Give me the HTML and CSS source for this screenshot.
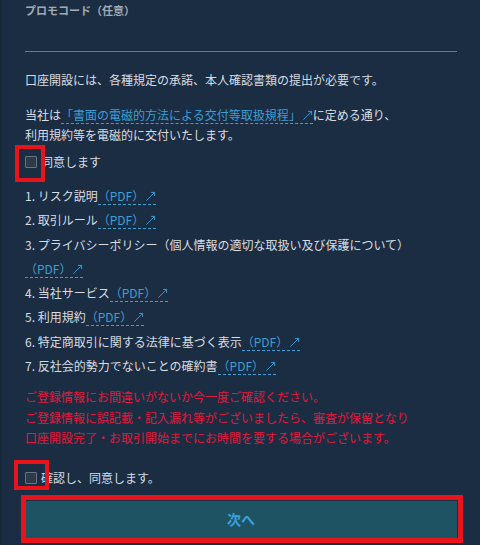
FILE: index.html
```html
<!DOCTYPE html>
<html lang="ja">
<head>
<meta charset="utf-8">
<title>口座開設</title>
<link rel="stylesheet" href="styles.css">
</head>
<body>
<div class="page">
  <div class="label">プロモコード（任意）</div>
  <div class="field"></div>

  <p class="para p1">口座開設には、各種規定の承諾、本人確認書類の提出が必要です。</p>
  <p class="para p2">当社は<a class="link">「書面の電磁的方法による交付等取扱規程」<svg class="ext" viewBox="0 0 12 12"><path d="M1.5 10.5 L10.5 1.5 M6.5 1.5 H10.5 V5.5"/></svg></a>に定める通り、<br>利用規約等を電磁的に交付いたします。</p>

  <label class="check-row cr1"><span class="box"></span><span>同意します</span></label>

  <div class="list">
    <div class="item">1. リスク説明<a class="link">（PDF）<svg class="ext" viewBox="0 0 12 12"><path d="M1.5 10.5 L10.5 1.5 M6.5 1.5 H10.5 V5.5"/></svg></a></div>
    <div class="item">2. 取引ルール<a class="link">（PDF）<svg class="ext" viewBox="0 0 12 12"><path d="M1.5 10.5 L10.5 1.5 M6.5 1.5 H10.5 V5.5"/></svg></a></div>
    <div class="item">3. プライバシーポリシー（個人情報の適切な取扱い及び保護について） <a class="link">（PDF）<svg class="ext" viewBox="0 0 12 12"><path d="M1.5 10.5 L10.5 1.5 M6.5 1.5 H10.5 V5.5"/></svg></a></div>
    <div class="item">4. 当社サービス<a class="link">（PDF）<svg class="ext" viewBox="0 0 12 12"><path d="M1.5 10.5 L10.5 1.5 M6.5 1.5 H10.5 V5.5"/></svg></a></div>
    <div class="item">5. 利用規約<a class="link">（PDF）<svg class="ext" viewBox="0 0 12 12"><path d="M1.5 10.5 L10.5 1.5 M6.5 1.5 H10.5 V5.5"/></svg></a></div>
    <div class="item">6. 特定商取引に関する法律に基づく表示<a class="link">（PDF）<svg class="ext" viewBox="0 0 12 12"><path d="M1.5 10.5 L10.5 1.5 M6.5 1.5 H10.5 V5.5"/></svg></a></div>
    <div class="item">7. 反社会的勢力でないことの確約書<a class="link">（PDF）<svg class="ext" viewBox="0 0 12 12"><path d="M1.5 10.5 L10.5 1.5 M6.5 1.5 H10.5 V5.5"/></svg></a></div>
  </div>

  <p class="notice">ご登録情報にお間違いがないか今一度ご確認ください。<br>ご登録情報に誤記載・記入漏れ等がございましたら、審査が保留となり<br>口座開設完了・お取引開始までにお時間を要する場合がございます。</p>

  <label class="check-row cr2"><span class="box"></span><span>確認し、同意します。</span></label>

  <div class="btn">次へ</div>
</div>

<div class="mark mark1"></div>
<div class="mark mark2"></div>
<div class="mark mark3"></div>
</body>
</html>
```

FILE: styles.css
```css
html, body {
  margin: 0;
  padding: 0;
}

body {
  background: #1b2d42;
  color: #d8dde2;
  font-family: "Noto Sans CJK JP", "Noto Sans", sans-serif;
  font-size: 12px;
  height: 545px;
  overflow: hidden;
  position: relative;
}

.page {
  padding: 0 23px 0 23px;
  border-left: 2px solid #172839;
  height: 545px;
  box-sizing: border-box;
}

.label {
  font-size: 11px;
  line-height: 20px;
  font-weight: bold;
  color: #a2abb5;
}

.field {
  height: 31px;
  border-bottom: 1px solid #6e7a87;
}

.para {
  margin: 0;
  line-height: 20px;
}

.p1 {
  margin-top: 18px;
}

.p2 {
  margin-top: 15px;
}

.link {
  color: #3c9fd6;
  border-bottom: 1px dashed #3c9fd6;
  white-space: nowrap;
  text-decoration: none;
}

.ext {
  width: 11px;
  height: 11px;
  margin-left: 1px;
  vertical-align: -1px;
  fill: none;
  stroke: #3c9fd6;
  stroke-width: 1;
}

.check-row {
  display: flex;
  align-items: center;
  height: 20px;
  line-height: 20px;
}

.cr1 {
  margin-top: 7px;
}

.cr2 {
  margin-top: 19px;
}

.box {
  width: 12px;
  height: 12px;
  box-sizing: border-box;
  border: 1px solid #6b747e;
  background: #2d3b49;
  border-radius: 1px;
  margin-right: 4px;
  flex: none;
}

.list {
  margin-top: 12px;
}

.item {
  line-height: 24.3px;
}

.notice {
  margin: 9px 0 0;
  line-height: 20.5px;
  color: #e2193d;
}

.btn {
  margin-top: 13px;
  height: 37px;
  background: #1e5364;
  color: #3ba2d9;
  font-size: 14px;
  font-weight: bold;
  display: flex;
  align-items: center;
  justify-content: center;
}

.mark {
  position: absolute;
  box-sizing: border-box;
  border: 4px solid #e8141b;
}

.mark1 {
  left: 15px;
  top: 145px;
  width: 30px;
  height: 37px;
}

.mark2 {
  left: 14px;
  top: 460px;
  width: 35px;
  height: 30px;
}

.mark3 {
  left: 21px;
  top: 495px;
  width: 442px;
  height: 48px;
  border-width: 5px;
}
```
